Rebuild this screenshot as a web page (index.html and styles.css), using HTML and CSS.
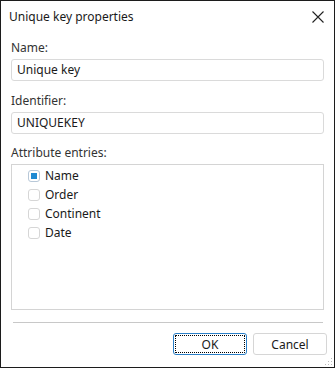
FILE: index.html
```html
<!DOCTYPE html>
<html lang="en">
<head>
  <meta charset="UTF-8">
  <title>Unique key properties</title>
  <link rel="stylesheet" href="styles.css">
</head>
<body>
  <div class="dialog">
    <div class="titlebar">
      <span class="title">Unique key properties</span>
      <svg class="close" width="12" height="12" viewBox="0 0 12 12">
        <path d="M0.5 0.5 L11.5 11.5 M11.5 0.5 L0.5 11.5" stroke="#222" stroke-width="1.1" fill="none"/>
      </svg>
    </div>
    <div class="content">
      <label class="field-label">Name:</label>
      <div class="textbox">Unique key</div>
      <label class="field-label">Identifier:</label>
      <div class="textbox">UNIQUEKEY</div>
      <label class="field-label list-label">Attribute entries:</label>
      <div class="listbox">
        <div class="item"><span class="check checked"></span>Name</div>
        <div class="item"><span class="check"></span>Order</div>
        <div class="item"><span class="check"></span>Continent</div>
        <div class="item"><span class="check"></span>Date</div>
      </div>
      <div class="separator"></div>
      <div class="buttons">
        <button class="btn default">OK</button>
        <button class="btn">Cancel</button>
      </div>
    </div>
    <svg class="grip" width="10" height="10" viewBox="0 0 10 10">
      <rect x="8" y="2" width="1" height="1" fill="#bbb"/>
      <rect x="5" y="5" width="1" height="1" fill="#bbb"/>
      <rect x="8" y="5" width="1" height="1" fill="#bbb"/>
      <rect x="2" y="8" width="1" height="1" fill="#bbb"/>
      <rect x="5" y="8" width="1" height="1" fill="#bbb"/>
      <rect x="8" y="8" width="1" height="1" fill="#bbb"/>
    </svg>
  </div>
</body>
</html>
```

FILE: styles.css
```css
body {
  margin: 0;
  background: #ffffff;
  font-family: "Noto Sans", "Open Sans", sans-serif;
  font-size: 12px;
  color: #1a1a1a;
}

.dialog {
  position: relative;
  width: 333px;
  height: 366px;
  border: 1px solid #1c1c1c;
  background: #fff;
}

.titlebar {
  height: 31px;
  display: flex;
  align-items: center;
  justify-content: space-between;
  padding: 0 10px 0 8px;
}

.title {
  font-size: 12px;
  color: #1a1a1a;
}

.close {
  display: block;
}

.content {
  padding: 8px 10px 0 10px;
  display: flex;
  flex-direction: column;
}

.field-label {
  display: block;
  margin-top: 12px;
  margin-bottom: 3px;
  height: 16px;
  line-height: 16px;
  color: #333;
}

.field-label:first-child {
  margin-top: 0;
}

.field-label.list-label {
  margin-top: 11px;
}

.textbox {
  height: 20px;
  line-height: 20px;
  border: 1px solid #dadada;
  border-radius: 3px;
  padding: 0 5px;
  color: #1a1a1a;
}

.listbox {
  height: 143px;
  border: 1px solid #d4d4d4;
  padding: 1px 0 0 16px;
}

.item {
  display: flex;
  align-items: center;
  height: 19px;
  color: #1a1a1a;
}

.check {
  width: 12px;
  height: 12px;
  border: 1px solid #d6d6d6;
  border-radius: 3px;
  margin-right: 5px;
  box-sizing: border-box;
  position: relative;
}

.check.checked {
  border-color: #b8c8d8;
}

.check.checked::after {
  content: "";
  position: absolute;
  left: 2px;
  top: 2px;
  width: 6px;
  height: 6px;
  background: #1f8ad2;
}

.separator {
  margin: 12px 1px 0 2px;
  border-top: 1px solid #c8c8c8;
}

.buttons {
  display: flex;
  justify-content: flex-end;
  gap: 6px;
  margin-top: 10px;
  margin-right: -3px;
}

.btn {
  width: 74px;
  height: 22px;
  font-family: "Noto Sans", "Open Sans", sans-serif;
  font-size: 12px;
  color: #1a1a1a;
  background: #fff;
  border: 1px solid #d6d6d6;
  border-radius: 3px;
  padding: 0;
}

.btn.default {
  border: 1px solid #2a7fc8;
  outline: 1px dotted #000;
  outline-offset: -3px;
}

.grip {
  position: absolute;
  right: 1px;
  bottom: 1px;
}
```
